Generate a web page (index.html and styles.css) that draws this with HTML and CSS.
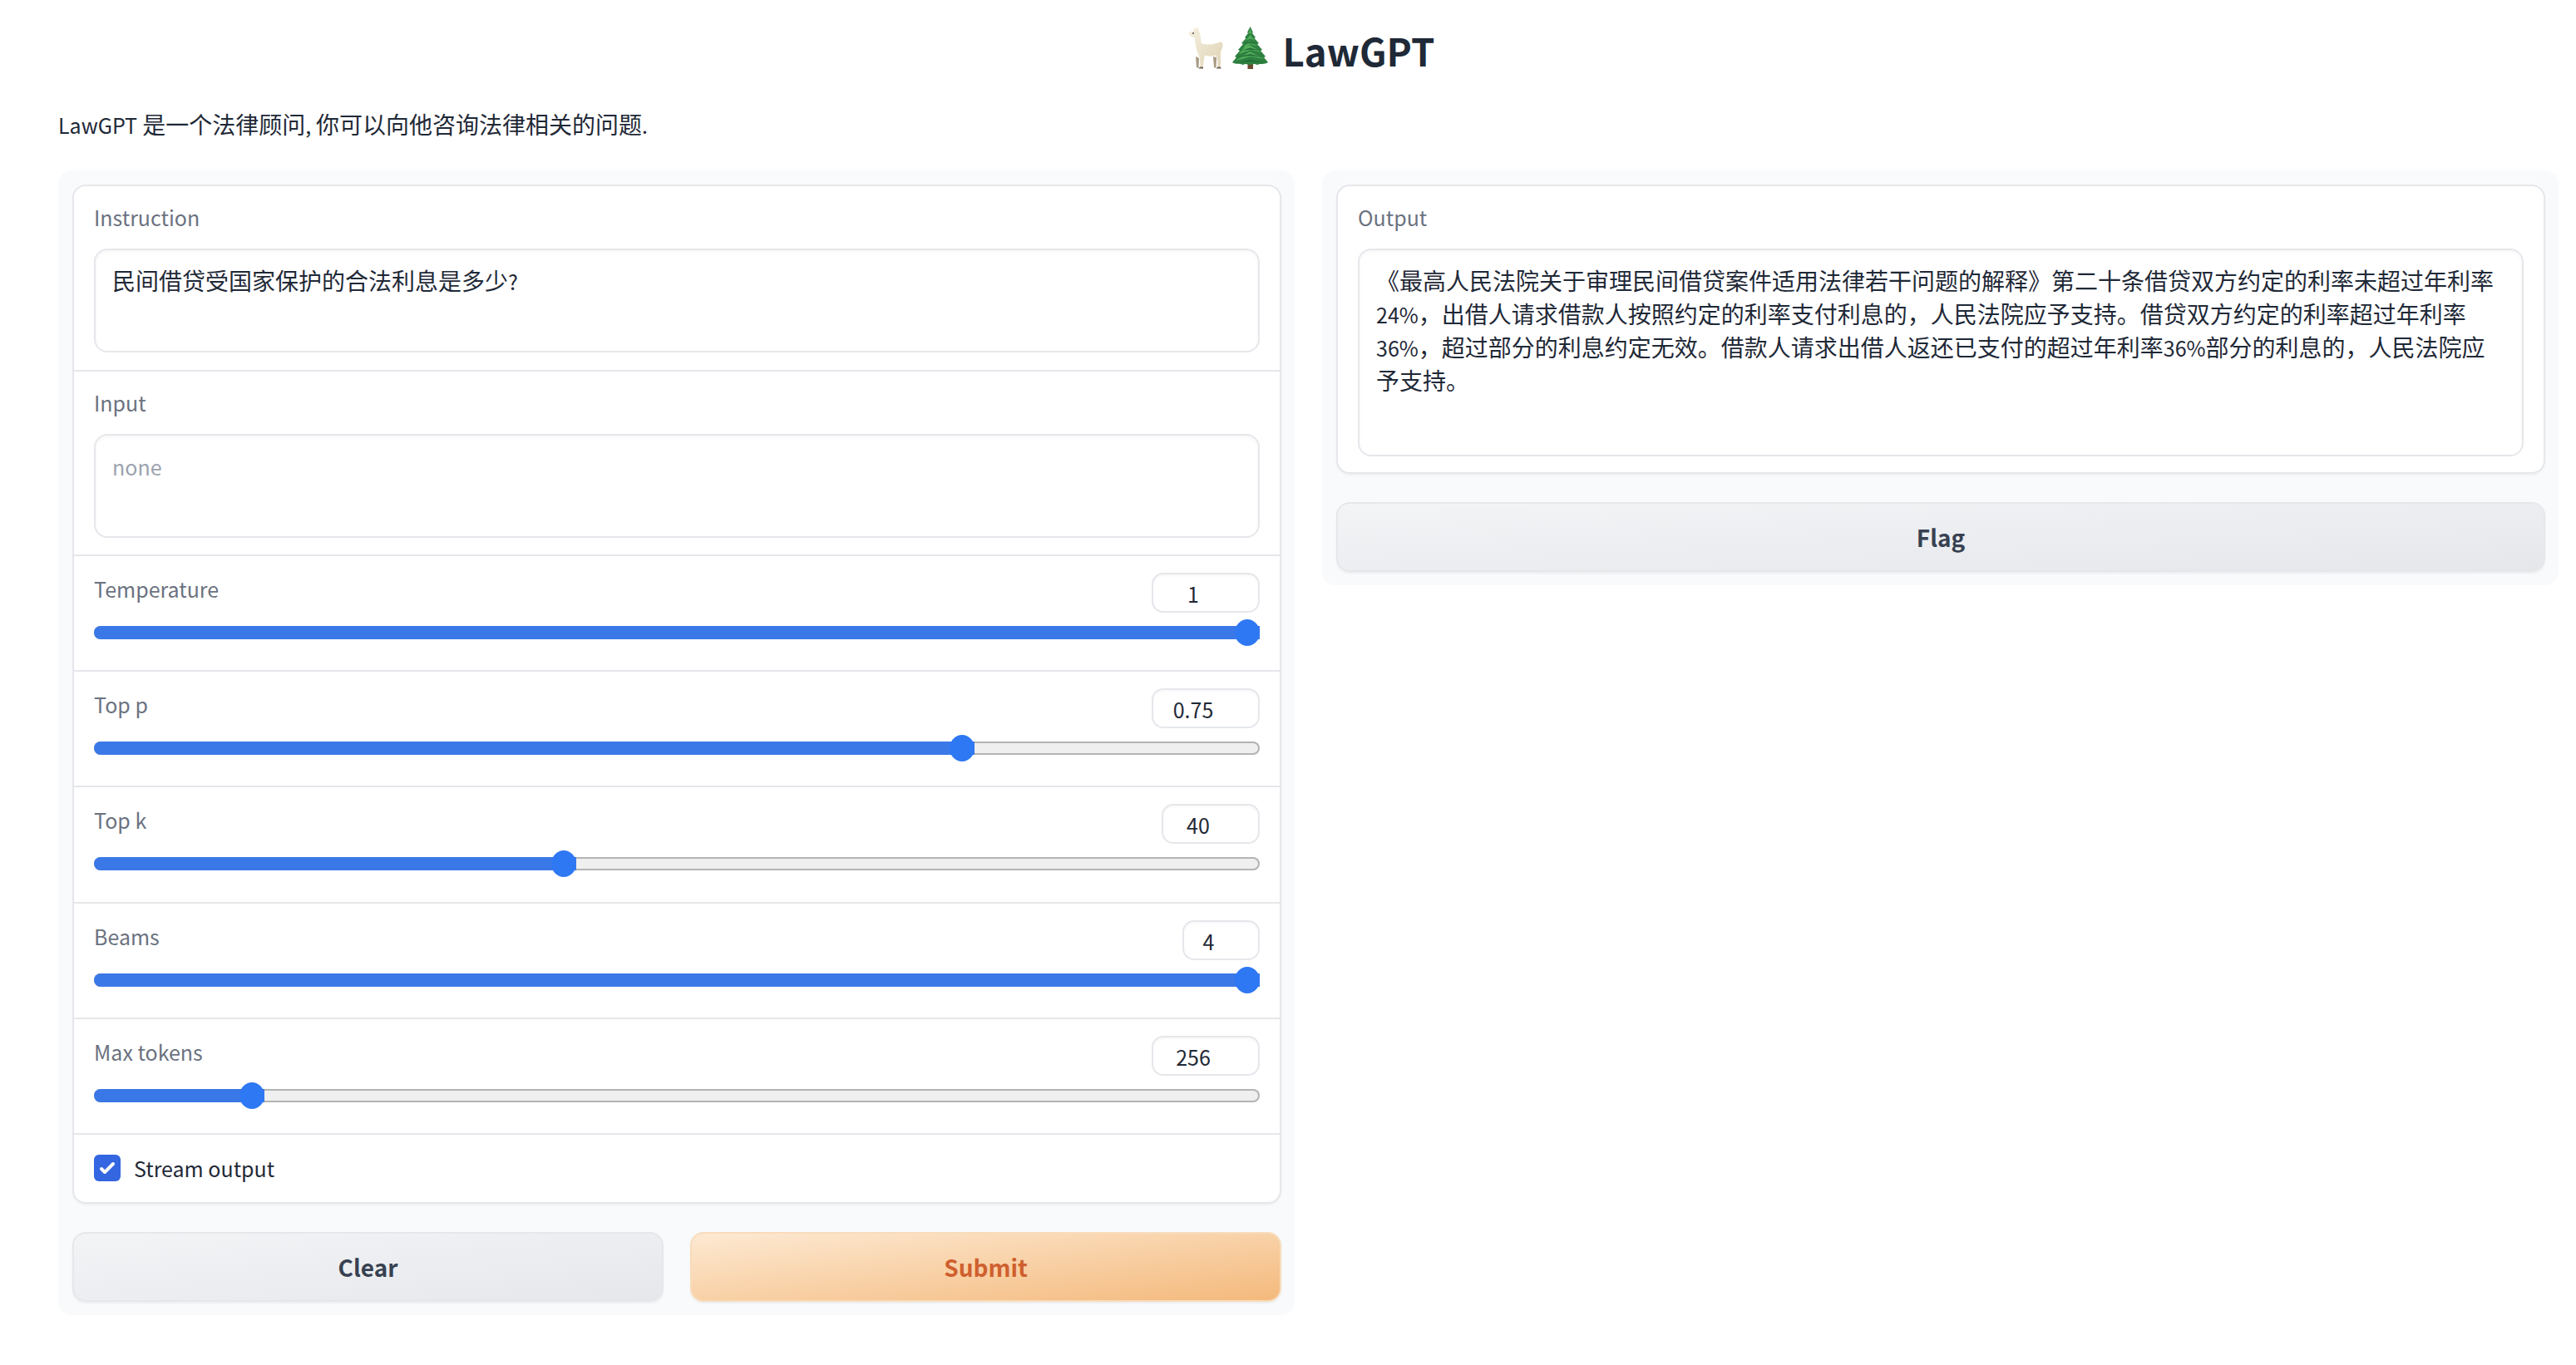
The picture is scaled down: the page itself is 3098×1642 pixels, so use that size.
FILE: index.html
```html
<!DOCTYPE html>
<html lang="zh-CN">
<head>
<meta charset="utf-8">
<title>LawGPT</title>
<link rel="stylesheet" href="styles.css">
</head>
<body>
<main class="page">
  <h1 class="title">
    <svg class="emoji-llama" viewBox="0 0 42 51" width="42" height="51" aria-label="llama" role="img">
      <defs>
        <linearGradient id="wool" x1="0" y1="0" x2="1" y2="1"><stop offset="0" stop-color="#f5efdf"/><stop offset="1" stop-color="#e0d4b6"/></linearGradient>
      </defs>
      <path fill="#a89a82" d="M9 36 L10 49 L12.500 50 L13 38 Z M30 36 L31 49 L33.500 50 L34 37 Z"/>
      <path fill="url(#wool)" d="M0.500 8 C2 6 5 5 7 5 L6 0.500 L9 3 L12 0 L12.500 5 C14.500 7 14.500 11 15 15 C15.500 19 16 20 18 21 C24 22 30 21.500 36 19.500 C38 17.500 42.500 18 41.500 22.500 C41.500 26 39.500 28 39 31 C38.500 36 39.500 43 38.500 49 L35.500 49 C35.500 44 35.500 39 33.500 34.500 C28 36 24 36 20 34.500 C18.500 40 18.500 45 17.500 49 L14.500 49 C14.500 43 14.500 38 12 33 C9.500 28 8.500 20 7.500 13 C5 13 1.500 11.500 0.500 8 Z"/>
      <circle cx="6" cy="8" r="0.9" fill="#3c3a36"/>
      <path fill="#6f6252" d="M14 48.500 L18 48.500 L18 50.500 L12.500 50.500 Z M35 48.500 L39 48.500 L39.500 50.500 L34 50.500 Z"/>
    </svg>
    <svg class="emoji-tree" viewBox="0 0 43 51" width="43" height="51" aria-label="evergreen tree" role="img">
      <rect x="18.500" y="43" width="6.500" height="8" fill="#6d4a2f"/>
      <path fill="#2e8040" d="M21.500 0 L25 7 L24 8 L28 13 L26.500 14 L32 20 L30 21 L36 28 L34 29 L40 36 L38 37 L43 43 C38 46 34 44 30 46 C26 44 24 46 21.500 46 C19 46 16 44 13 46 C9 44 5 46 0 43 L5 37 L3 36 L9 29 L7 28 L13 21 L11 20 L16.500 14 L15 13 L19 8 L18 7 Z"/>
      <path fill="#52ad5a" d="M21.500 3 L24 9 L21.500 8 L19 9 Z M21.500 10 L27 17 L21.500 14.500 L16 17 Z M21 17 L31 24 L22 21 L13 25 Z M15 24 L21 22 L35 31 L22 28 L8 33 Z M21 30 L39 39 L22 36 L4 41 Z"/>
      <path fill="#1f6a33" d="M14 21 L21.500 18 L29 21 L21.500 20 Z M10 29 L21.500 25.500 L33 29 L21.500 27.500 Z M6 37 L21.500 33 L37 37 L21.500 35 Z M5 43 L21.500 40 L38 43 L21.500 42 Z"/>
    </svg>
    <span class="title-text">LawGPT</span>
  </h1>
  <p class="intro"><span class="latin">LawGPT</span> 是一个法律顾问<span class="latin">, </span>你可以向他咨询法律相关的问题<span class="latin">.</span></p>

  <div class="columns">
    <section class="panel">
      <div class="card">
        <div class="field">
          <div class="label">Instruction</div>
          <div class="box">民间借贷受国家保护的合法利息是多少<span class="latin">?</span></div>
        </div>
        <div class="field">
          <div class="label">Input</div>
          <div class="box placeholder"><span class="latin">none</span></div>
        </div>
        <div class="slider-row">
          <div class="slider-head"><span class="label">Temperature</span><span class="num num-wide">1</span></div>
          <div class="track"><div class="fill" style="width:100%"><span class="thumb"></span></div></div>
        </div>
        <div class="slider-row">
          <div class="slider-head"><span class="label">Top p</span><span class="num num-wide">0.75</span></div>
          <div class="track"><div class="fill" style="width:75.53%"><span class="thumb"></span></div></div>
        </div>
        <div class="slider-row">
          <div class="slider-head"><span class="label">Top k</span><span class="num num-mid">40</span></div>
          <div class="track"><div class="fill" style="width:41.37%"><span class="thumb"></span></div></div>
        </div>
        <div class="slider-row">
          <div class="slider-head"><span class="label">Beams</span><span class="num num-small">4</span></div>
          <div class="track"><div class="fill" style="width:100%"><span class="thumb"></span></div></div>
        </div>
        <div class="slider-row">
          <div class="slider-head"><span class="label">Max tokens</span><span class="num num-wide">256</span></div>
          <div class="track"><div class="fill" style="width:14.62%"><span class="thumb"></span></div></div>
        </div>
        <label class="check-row">
          <span class="checkbox">
            <svg viewBox="0 0 16 16" width="32" height="32"><path d="M12.207 4.793a1 1 0 0 1 0 1.414l-5 5a1 1 0 0 1-1.414 0l-2-2a1 1 0 0 1 1.414-1.414L6.500 9.086l4.293-4.293a1 1 0 0 1 1.414 0z" fill="#fff"/></svg>
          </span>
          <span class="check-text">Stream output</span>
        </label>
      </div>
      <div class="actions">
        <button class="btn btn-secondary" type="button">Clear</button>
        <button class="btn btn-primary" type="button">Submit</button>
      </div>
    </section>

    <section class="panel panel-output">
      <div class="card">
        <div class="field field-output">
          <div class="label">Output</div>
          <div class="box box-output">《最高人民法院关于审理民间借贷案件适用法律若干问题的解释》第二十条借贷双方约定的利率未超过年利率<span class="latin">24%</span>，出借人请求借款人按照约定的利率支付利息的，人民法院应予支持。借贷双方约定的利率超过年利率<span class="latin">36%</span>，超过部分的利息约定无效。借款人请求出借人返还已支付的超过年利率<span class="latin">36%</span>部分的利息的，人民法院应予支持。</div>
        </div>
      </div>
      <button class="btn btn-secondary btn-flag" type="button">Flag</button>
    </section>
  </div>
</main>
</body>
</html>
```
FILE: styles.css
```css
* { box-sizing: border-box; }
html, body { margin: 0; padding: 0; background: #fff; }
body {
  font-family: "Noto Sans CJK SC", "Noto Sans", sans-serif;
  color: #1f2937;
  font-size: 28px;
}
.latin { font-size: 25px; line-height: 1; }
.page { padding: 0 21px 0 70px; }
.title {
  margin: 0;
  height: 129px;
  padding: 32px 0 0 8px;
  display: flex;
  justify-content: center;
  align-items: flex-start;
  font-size: 45.5px;
  font-weight: 700;
  line-height: 56px;
  color: #1f2937;
}
.emoji-llama { display: block; margin-right: 11px; }
.emoji-tree { display: block; margin-right: 17px; }
.intro { margin: 0 0 36px; line-height: 40px; font-size: 28px; color: #1f2937; }
.columns { display: grid; grid-template-columns: 1fr 1fr; gap: 33px; align-items: start; }
.panel {
  background: #f9fafb;
  border-radius: 16px;
  padding: 17px 16px 16px 17px;
}
.card {
  background: #fff;
  border: 2px solid #e5e7eb;
  border-radius: 16px;
  box-shadow: 0 2px 3px rgba(0,0,0,0.04);
}
.field { padding: 17px 24px 20.5px; border-bottom: 2px solid #e5e7eb; }
.field-output { border-bottom: 0; padding-bottom: 19px; }
.label { font-size: 25px; line-height: 40px; color: #6b7280; display: block; }
.box {
  margin-top: 18px;
  height: 125px;
  border: 2px solid #e5e7eb;
  border-radius: 16px;
  padding: 16px 20px;
  line-height: 40px;
  color: #1f2937;
  background: #fff;
  box-shadow: inset 0 2px 4px rgba(0,0,0,0.04);
}
.placeholder { color: #9ca3af; }
.box-output { height: 250px; }
.slider-row {
  padding: 20px 24px 0;
  height: 139.2px;
  border-bottom: 2px solid #e5e7eb;
}
.slider-head { display: flex; justify-content: space-between; align-items: flex-start; height: 48px; }
.slider-head .label { line-height: 38px; }
.num {
  height: 48px;
  border: 2px solid #e5e7eb;
  border-radius: 14px;
  font-size: 25px;
  line-height: 46px;
  text-align: center;
  padding-right: 30px;
  color: #1f2937;
  background: #fff;
  box-shadow: inset 0 2px 3px rgba(0,0,0,0.03);
}
.num-wide { width: 130px; }
.num-mid { width: 118px; }
.num-small { width: 93px; }
.track {
  margin-top: 16px;
  height: 16px;
  box-shadow: inset 0 0 0 2px #b4b4b4;
  border-radius: 8px;
  background: #efefef;
}
.fill {
  position: relative;
  height: 16px;
  background: #3b78e7;
  border-radius: 8px 0 0 8px;
}
.thumb {
  position: absolute;
  right: 0;
  top: -8px;
  width: 30px;
  height: 32px;
  border-radius: 50%;
  background: #2f78f3;
}
.check-row { display: flex; align-items: center; gap: 16px; height: 81px; padding: 0 24px; }
.checkbox {
  width: 32px;
  height: 32px;
  border-radius: 6px;
  background: #3366e0;
  display: flex;
}
.check-text { font-size: 25px; line-height: 40px; color: #1f2937; }
.actions { display: grid; grid-template-columns: 1fr 1fr; gap: 32px; margin-top: 34px; }
.btn {
  display: block;
  width: 100%;
  height: 84px;
  border-radius: 16px;
  font-family: inherit;
  font-size: 28px;
  font-weight: 700;
  box-shadow: 0 2px 3px rgba(0,0,0,0.05);
  cursor: pointer;
}
.btn-secondary {
  border: 2px solid #e5e7eb;
  background: linear-gradient(to bottom right, #f3f4f6, #e5e7eb);
  color: #374151;
}
.btn-primary {
  border: 2px solid #f8dcbc;
  background: linear-gradient(to bottom right, #fde9d2, #f4b97c);
  color: #cf5f2e;
}
.btn-flag { margin-top: 34px; }
```
